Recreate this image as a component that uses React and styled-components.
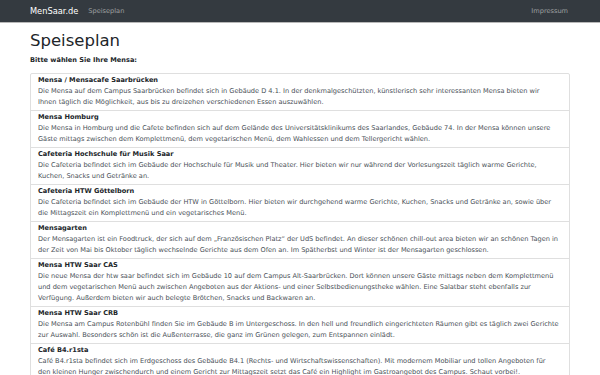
import React from "react";
import styled, { createGlobalStyle } from "styled-components";

const mensen = [
  {
    name: "Mensa / Mensacafe Saarbrücken",
    text: "Die Mensa auf dem Campus Saarbrücken befindet sich in Gebäude D 4.1. In der denkmalgeschützten, künstlerisch sehr interessanten Mensa bieten wir Ihnen täglich die Möglichkeit, aus bis zu dreizehen verschiedenen Essen auszuwählen.",
  },
  {
    name: "Mensa Homburg",
    text: "Die Mensa in Homburg und die Cafete befinden sich auf dem Gelände des Universitätsklinikums des Saarlandes, Gebäude 74. In der Mensa können unsere Gäste mittags zwischen dem Komplettmenü, dem vegetarischen Menü, dem Wahlessen und dem Tellergericht wählen.",
  },
  {
    name: "Cafeteria Hochschule für Musik Saar",
    text: "Die Cafeteria befindet sich im Gebäude der Hochschule für Musik und Theater. Hier bieten wir nur während der Vorlesungszeit täglich warme Gerichte, Kuchen, Snacks und Getränke an.",
  },
  {
    name: "Cafeteria HTW Göttelborn",
    text: "Die Cafeteria befindet sich im Gebäude der HTW in Göttelborn. Hier bieten wir durchgehend warme Gerichte, Kuchen, Snacks und Getränke an, sowie über die Mittagszeit ein Komplettmenü und ein vegetarisches Menü.",
  },
  {
    name: "Mensagarten",
    text: "Der Mensagarten ist ein Foodtruck, der sich auf dem „Französischen Platz“ der UdS befindet. An dieser schönen chill-out area bieten wir an schönen Tagen in der Zeit von Mai bis Oktober täglich wechselnde Gerichte aus dem Ofen an. Im Spätherbst und Winter ist der Mensagarten geschlossen.",
  },
  {
    name: "Mensa HTW Saar CAS",
    text: "Die neue Mensa der htw saar befindet sich im Gebäude 10 auf dem Campus Alt-Saarbrücken. Dort können unsere Gäste mittags neben dem Komplettmenü und dem vegetarischen Menü auch zwischen Angeboten aus der Aktions- und einer Selbstbedienungstheke wählen. Eine Salatbar steht ebenfalls zur Verfügung. Außerdem bieten wir auch belegte Brötchen, Snacks und Backwaren an.",
  },
  {
    name: "Mensa HTW Saar CRB",
    text: "Die Mensa am Campus Rotenbühl finden Sie im Gebäude B im Untergeschoss. In den hell und freundlich eingerichteten Räumen gibt es täglich zwei Gerichte zur Auswahl. Besonders schön ist die Außenterrasse, die ganz im Grünen gelegen, zum Entspannen einlädt.",
  },
  {
    name: "Café B4.r1sta",
    text: "Café B4.r1sta befindet sich im Erdgeschoss des Gebäude B4.1 (Rechts- und Wirtschaftswissenschaften). Mit modernem Mobiliar und tollen Angeboten für den kleinen Hunger zwischendurch und einem Gericht zur Mittagszeit setzt das Café ein Highlight im Gastroangebot des Campus. Schaut vorbei!.",
  },
];

const GlobalStyle = createGlobalStyle`
  body {
    margin: 0;
    background: #ffffff;
    font-family: "DejaVu Sans", sans-serif;
    color: #212529;
  }
`;

const Navbar = styled.nav`
  background: #343a40;
  height: 22px;
  border-bottom: 1px solid #b8b8b8;
`;

const NavInner = styled.div`
  width: 540px;
  height: 100%;
  margin: 0 auto;
  display: flex;
  align-items: center;
`;

const Brand = styled.a`
  font-size: 8.25px;
  color: #ffffff;
  margin-right: 10px;
`;

const NavLink = styled.a`
  font-size: 6.6px;
  color: rgba(255, 255, 255, 0.5);
  margin-left: ${(props) => (props.$push ? "auto" : "0")};
  margin-right: ${(props) => (props.$push ? "2px" : "0")};
`;

const Container = styled.main`
  width: 540px;
  margin: 0 auto;
`;

const Title = styled.h1`
  font-size: 16.5px;
  font-weight: 500;
  line-height: 1.2;
  margin: 8px 0 5px;
`;

const Prompt = styled.p`
  font-size: 6.6px;
  font-weight: bold;
  margin: 0 0 9px;
`;

const List = styled.div`
  border: 1px solid rgba(0, 0, 0, 0.125);
  border-radius: 2px;
`;

const Item = styled.a`
  display: block;
  padding: 1.5px 10px 1.5px 7px;
  border-top: ${(props) => (props.$first ? "none" : "1px solid rgba(0, 0, 0, 0.125)")};
  color: #495057;
`;

const ItemName = styled.div`
  font-size: 6.6px;
  font-weight: bold;
  line-height: 11px;
  color: #212529;
`;

const ItemText = styled.div`
  font-size: 6.6px;
  line-height: 11px;
`;

export default function App() {
  return (
    <>
      <GlobalStyle />
      <Navbar>
        <NavInner>
          <Brand>MenSaar.de</Brand>
          <NavLink>Speiseplan</NavLink>
          <NavLink $push>Impressum</NavLink>
        </NavInner>
      </Navbar>
      <Container>
        <Title>Speiseplan</Title>
        <Prompt>Bitte wählen Sie Ihre Mensa:</Prompt>
        <List>
          {mensen.map((m, i) => (
            <Item key={m.name} $first={i === 0}>
              <ItemName>{m.name}</ItemName>
              <ItemText>{m.text}</ItemText>
            </Item>
          ))}
        </List>
      </Container>
    </>
  );
}
